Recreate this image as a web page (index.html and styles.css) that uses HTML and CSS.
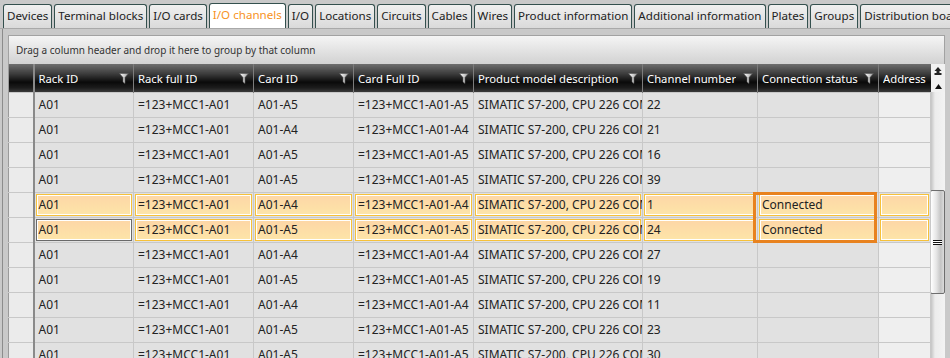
FILE: index.html
```html
<!DOCTYPE html>
<html lang="en">
<head>
    <meta charset="UTF-8">
    <meta name="viewport" content="width=device-width, initial-scale=1.0">
    <title>I/O channels</title>
    <link rel="stylesheet" href="styles.css">
</head>
<body>
    <svg width="0" height="0" class="defs">
        <defs>
            <linearGradient id="funnel" x1="0" y1="0" x2="1" y2="0">
                <stop offset="0" stop-color="#ffffff"/>
                <stop offset="0.6" stop-color="#c8c8c8"/>
                <stop offset="1" stop-color="#8a8a8a"/>
            </linearGradient>
            <symbol id="filter" viewBox="0 0 10 11">
                <path d="M0.5 0.5 H9.5 L6 4.5 V10.5 L4 9 V4.5 Z" fill="url(#funnel)" stroke="#555" stroke-width="0.6"/>
            </symbol>
        </defs>
    </svg>

    <div class="tabs">
        <div class="tab">Devices</div>
        <div class="tab">Terminal blocks</div>
        <div class="tab">I/O cards</div>
        <div class="tab active">I/O channels</div>
        <div class="tab">I/O</div>
        <div class="tab">Locations</div>
        <div class="tab">Circuits</div>
        <div class="tab">Cables</div>
        <div class="tab">Wires</div>
        <div class="tab">Product information</div>
        <div class="tab">Additional information</div>
        <div class="tab">Plates</div>
        <div class="tab">Groups</div>
        <div class="tab">Distribution boards</div>
    </div>

    <div class="frame">
        <div class="group-panel">Drag a column header and drop it here to group by that column</div>

        <div class="grid">
            <div class="table-wrap">
                <table class="data">
                    <colgroup>
                        <col style="width:25px">
                        <col style="width:100px">
                        <col style="width:120px">
                        <col style="width:100px">
                        <col style="width:120px">
                        <col style="width:169px">
                        <col style="width:115px">
                        <col style="width:121px">
                        <col style="width:52px">
                    </colgroup>
                    <thead>
                        <tr>
                            <th class="ind"></th>
                            <th><div class="hc"><span>Rack ID</span><svg class="flt"><use href="#filter"/></svg></div></th>
                            <th><div class="hc"><span>Rack full ID</span><svg class="flt"><use href="#filter"/></svg></div></th>
                            <th><div class="hc"><span>Card ID</span><svg class="flt"><use href="#filter"/></svg></div></th>
                            <th><div class="hc"><span>Card Full ID</span><svg class="flt"><use href="#filter"/></svg></div></th>
                            <th><div class="hc"><span>Product model description</span><svg class="flt"><use href="#filter"/></svg></div></th>
                            <th><div class="hc"><span>Channel number</span><svg class="flt"><use href="#filter"/></svg></div></th>
                            <th><div class="hc"><span>Connection status</span><svg class="flt"><use href="#filter"/></svg></div></th>
                            <th><div class="hc"><span>Address</span></div></th>
                        </tr>
                    </thead>
                    <tbody>
                        <tr><td class="ind"></td><td>A01</td><td>=123+MCC1-A01</td><td>A01-A5</td><td>=123+MCC1-A01-A5</td><td>SIMATIC S7-200, CPU 226 COMPACT UNIT</td><td>22</td><td></td><td class="addr"></td></tr>
                        <tr><td class="ind"></td><td>A01</td><td>=123+MCC1-A01</td><td>A01-A4</td><td>=123+MCC1-A01-A4</td><td>SIMATIC S7-200, CPU 226 COMPACT UNIT</td><td>21</td><td></td><td class="addr"></td></tr>
                        <tr><td class="ind"></td><td>A01</td><td>=123+MCC1-A01</td><td>A01-A5</td><td>=123+MCC1-A01-A5</td><td>SIMATIC S7-200, CPU 226 COMPACT UNIT</td><td>16</td><td></td><td class="addr"></td></tr>
                        <tr><td class="ind"></td><td>A01</td><td>=123+MCC1-A01</td><td>A01-A5</td><td>=123+MCC1-A01-A5</td><td>SIMATIC S7-200, CPU 226 COMPACT UNIT</td><td>39</td><td></td><td class="addr"></td></tr>
                        <tr class="sel"><td class="ind"></td><td>A01</td><td>=123+MCC1-A01</td><td>A01-A4</td><td>=123+MCC1-A01-A4</td><td>SIMATIC S7-200, CPU 226 COMPACT UNIT</td><td>1</td><td>Connected</td><td class="addr"></td></tr>
                        <tr class="sel"><td class="ind"></td><td class="current">A01</td><td>=123+MCC1-A01</td><td>A01-A5</td><td>=123+MCC1-A01-A5</td><td>SIMATIC S7-200, CPU 226 COMPACT UNIT</td><td>24</td><td>Connected</td><td class="addr"></td></tr>
                        <tr><td class="ind"></td><td>A01</td><td>=123+MCC1-A01</td><td>A01-A4</td><td>=123+MCC1-A01-A4</td><td>SIMATIC S7-200, CPU 226 COMPACT UNIT</td><td>27</td><td></td><td class="addr"></td></tr>
                        <tr><td class="ind"></td><td>A01</td><td>=123+MCC1-A01</td><td>A01-A5</td><td>=123+MCC1-A01-A5</td><td>SIMATIC S7-200, CPU 226 COMPACT UNIT</td><td>19</td><td></td><td class="addr"></td></tr>
                        <tr><td class="ind"></td><td>A01</td><td>=123+MCC1-A01</td><td>A01-A4</td><td>=123+MCC1-A01-A4</td><td>SIMATIC S7-200, CPU 226 COMPACT UNIT</td><td>11</td><td></td><td class="addr"></td></tr>
                        <tr><td class="ind"></td><td>A01</td><td>=123+MCC1-A01</td><td>A01-A5</td><td>=123+MCC1-A01-A5</td><td>SIMATIC S7-200, CPU 226 COMPACT UNIT</td><td>23</td><td></td><td class="addr"></td></tr>
                        <tr><td class="ind"></td><td>A01</td><td>=123+MCC1-A01</td><td>A01-A5</td><td>=123+MCC1-A01-A5</td><td>SIMATIC S7-200, CPU 226 COMPACT UNIT</td><td>30</td><td></td><td class="addr"></td></tr>
                    </tbody>
                </table>
                <!-- selection box over the two Connection status cells -->
                <div class="range-box"></div>
            </div>

            <div class="scrollbar">
                <div class="sb-head">
                    <svg width="8" height="10" viewBox="0 0 8 10"><path d="M4 0 L7.5 4 H5.5 V6 H7.5 V8 H0.5 V6 H2.5 V4 H0.5 Z" fill="#222"/></svg>
                    <svg width="7" height="5" viewBox="0 0 7 5" class="up"><path d="M3.5 0 L7 5 H0 Z" fill="#111"/></svg>
                </div>
                <div class="sb-track">
                    <div class="thumb"><span class="grip"></span></div>
                </div>
            </div>
        </div>
    </div>
</body>
</html>
```

FILE: styles.css
```css
* {
    box-sizing: border-box;
}

body {
    margin: 0;
    background: #c9c9c9;
    font-family: 'Noto Sans', 'Open Sans', sans-serif;
    font-size: 12px;
    color: #222;
    overflow: hidden;
    height: 358px;
}

.defs {
    position: absolute;
}

/* Tab strip */
.tabs {
    display: flex;
    align-items: flex-end;
    gap: 2px;
    height: 29px;
    padding-left: 3px;
    border-bottom: 1px solid #a9a9a9;
    white-space: nowrap;
    overflow: hidden;
}

.tab {
    height: 24px;
    line-height: 22px;
    padding: 0 3px;
    border: 1px solid #34504e;
    border-bottom: none;
    border-radius: 3px 3px 0 0;
    background: linear-gradient(#f0f0f0, #dadada);
    color: #222;
    font-size: 11.6px;
    flex: none;
}

.tab.active {
    height: 25px;
    background: #fff;
    color: #f7931e;
}

/* Tab content */
.frame {
    margin-left: 2px;
    margin-right: 5px;
    border-left: 1px solid #8c8c8c;
    padding: 6px 0 0 5px;
}

.group-panel {
    height: 29px;
    line-height: 28px;
    padding-left: 7px;
    font-size: 10px;
    color: #333;
    border: 1px solid #a2a2a2;
    border-bottom: none;
    background: linear-gradient(#f5f5f5, #d2d2d2);
}

.grid {
    display: flex;
    height: 294px;
    overflow: hidden;
}

.table-wrap {
    position: relative;
    width: 922px;
    flex: none;
}

.data {
    table-layout: fixed;
    width: 922px;
    border-collapse: collapse;
}

.data th {
    height: 28px;
    padding: 1px 4px 0 4px;
    text-align: left;
    font-weight: normal;
    font-size: 11.3px;
    color: #fff;
    background: linear-gradient(#6e6e6e 0%, #3c3c3c 35%, #0a0a0a 65%, #1c1c1c 85%, #3a3a3a 100%);
    border-left: 1px solid #7c7c7c;
    white-space: nowrap;
    overflow: hidden;
}

.hc {
    display: flex;
    align-items: center;
    justify-content: space-between;
    gap: 3px;
    overflow: hidden;
}

.hc span {
    overflow: hidden;
    flex: 0 1 auto;
}

.flt {
    flex: none;
    width: 10px;
    height: 11px;
}

.data td {
    height: 25px;
    padding: 0 3px 0 4px;
    background: #e1e1e1;
    border: 1px solid #c8c8c8;
    white-space: nowrap;
    overflow: hidden;
    text-overflow: clip;
}

.data td.addr {
    background: #efefef;
}

.data .ind {
    background: #ebebeb;
    border-left: 1px solid #9a9a9a;
    border-right: 2px solid #8a8a8a;
}

.data th.ind {
    background: linear-gradient(#6e6e6e 0%, #3c3c3c 35%, #0a0a0a 65%, #1c1c1c 85%, #3a3a3a 100%);
}

/* Selected rows */
.sel td:not(.ind) {
    background: linear-gradient(#fdd4a6, #fde6a8);
    box-shadow: inset 0 0 0 1px #e1e1e1, inset 0 0 0 2px #f6c13a, inset 0 0 0 3px #fff;
}

.sel td.current {
    box-shadow: inset 0 0 0 1px #e1e1e1, inset 0 0 0 2px #6a6a6a, inset 0 0 0 3px #fff;
}

.range-box {
    position: absolute;
    left: 745px;
    top: 128px;
    width: 124px;
    height: 51px;
    border: 3px solid #e8821f;
    pointer-events: none;
}

/* Vertical scrollbar */
.scrollbar {
    width: 15px;
    flex: none;
    display: flex;
    flex-direction: column;
    background: #f1f1f1;
    border-left: 1px solid #8a8a8a;
}

.sb-head {
    height: 28px;
    display: flex;
    flex-direction: column;
    align-items: center;
    padding-top: 3px;
    gap: 7px;
}

.sb-track {
    flex: 1;
    background: linear-gradient(90deg, #c4c4c4, #ececec 4px, #f3f3f3);
    padding-top: 98px;
}

.thumb {
    height: 104px;
    width: 15px;
    margin-left: -1px;
    border: 1px solid #6e6e6e;
    border-radius: 2px;
    background: linear-gradient(90deg, #ffffff, #e6e6e6 40%, #c4c4c4 75%, #dcdcdc);
    display: flex;
    align-items: center;
    justify-content: center;
}

.grip {
    width: 9px;
    height: 5px;
    border-top: 1px solid #111;
    border-bottom: 1px solid #111;
    background: linear-gradient(#fff 0 1px, #111 1px 2px, #fff 2px);
}
```
